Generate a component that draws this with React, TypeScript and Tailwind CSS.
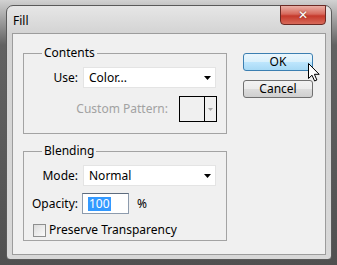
import React from 'react';

const Arrow: React.FC<{ color?: string; w?: number }> = ({ color = '#000', w = 7 }) => (
  <svg width={w} height={Math.ceil(w / 2)} viewBox={`0 0 ${w} ${Math.ceil(w / 2)}`}>
    <path d={`M0 0H${w}L${w / 2} ${Math.ceil(w / 2)}Z`} fill={color} />
  </svg>
);

const Select: React.FC<{ value: string }> = ({ value }) => (
  <div className="w-[133px] h-[21px] bg-white border border-[#e4e4e4] flex items-center justify-between pl-[5px] pr-[4px]">
    <span>{value}</span>
    <Arrow />
  </div>
);

const Label: React.FC<{ children: React.ReactNode }> = ({ children }) => (
  <span className="w-[54px] text-right shrink-0">{children}</span>
);

const App: React.FC = () => {
  return (
    <div className="w-[337px] h-[265px] overflow-hidden pt-[5px] pl-[6px] bg-[linear-gradient(to_bottom,#d2d2d2_0px,#a4a4a4_18px,#626262_45px,#505050_100%)] font-['Segoe_UI','Noto_Sans',sans-serif] text-[12px] leading-[16px] text-black">
      <div className="relative w-[326px] h-[255px] rounded-t-[7px] rounded-b-[4px] border border-[#5a5a5a] bg-[linear-gradient(to_bottom,#e6e6e6,#d3d3d3_28px,#d8d8d8)] flex flex-col px-[5px] pb-[4px]">
        {/* title bar */}
        <div className="h-[27px] flex items-start justify-between">
          <span className="mt-[7px] ml-[1px]">Fill</span>
          <div className="-mt-px w-[46px] h-[20px] rounded-b-[4px] border border-[#6b2a24] bg-[linear-gradient(to_bottom,#eab0a6,#d7685b_45%,#c5392b_55%,#d86a5a)] flex items-center justify-center">
            <span className="text-white font-bold text-[12px] leading-none font-['DejaVu_Sans',sans-serif] [text-shadow:0_0_2px_#6b2a24]">✕</span>
          </div>
        </div>

        {/* client */}
        <div className="flex-1 border border-[#9c9c9c] bg-[#f0f0f0] flex pl-[10px]">
          <div className="w-[204px] flex flex-col mt-[11px]">
            <fieldset className="border border-[#a3a3a3] px-0 pt-[6px] pb-[11px]">
              <legend className="ml-[18px] px-[2px]">Contents</legend>
              <div className="flex items-center gap-[5px]">
                <Label>Use:</Label>
                <Select value="Color..." />
              </div>
              <div className="flex items-center justify-end mt-[8px] pr-[9px]">
                <span className="text-[#a2a2a2] mr-[11px]">Custom Pattern:</span>
                <div className="w-[38px] h-[26px] border border-black flex">
                  <div className="w-[25px] border-r border-black" />
                  <div className="flex-1 flex items-center justify-center">
                    <Arrow color="#a8a8a8" w={5} />
                  </div>
                </div>
              </div>
            </fieldset>

            <fieldset className="mt-[9px] border border-[#a3a3a3] px-0 pt-[6px] pb-[2px]">
              <legend className="ml-[18px] px-[2px]">Blending</legend>
              <div className="flex items-center gap-[5px]">
                <Label>Mode:</Label>
                <Select value="Normal" />
              </div>
              <div className="flex items-center gap-[4px] mt-[7px]">
                <Label>Opacity:</Label>
                <div className="w-[47px] h-[21px] bg-white border border-[#8d9bad] border-t-[#5d6b7d] flex items-center pl-[5px]">
                  <span className="bg-[#3399ff] text-white leading-[14px] px-px">100</span>
                </div>
                <span className="ml-[4px]">%</span>
              </div>
              <div className="flex items-center mt-[8px] ml-[9px] h-[16px]">
                <div className="w-[13px] h-[13px] border border-[#8e8f8f] bg-[linear-gradient(135deg,#dcdcdc,#fbfbfb)]" />
                <span className="ml-[3px]">Preserve Transparency</span>
              </div>
            </fieldset>
          </div>

          <div className="ml-[16px] w-[70px] flex flex-col mt-[19px]">
            <div className="h-[18px] rounded-[3px] border border-[#3c7fb1] bg-[linear-gradient(to_bottom,#eaf6fd,#d9f0fc_50%,#bee6fd_50%,#a7d9f5)] flex items-center justify-center">
              OK
            </div>
            <div className="mt-[9px] h-[18px] rounded-[3px] border border-[#707070] bg-[linear-gradient(to_bottom,#f2f2f2,#ebebeb_50%,#dddddd_50%,#cfcfcf)] flex items-center justify-center">
              Cancel
            </div>
          </div>
        </div>

        {/* mouse pointer */}
        <svg className="absolute left-[301px] top-[57px]" width="12" height="19" viewBox="0 0 12 19">
          <path d="M0.5 0.5V15.5L4 12.2L6.6 18L8.9 17L6.4 11.3H11.2Z" fill="#fff" stroke="#000" strokeWidth="1" strokeLinejoin="round" />
        </svg>
      </div>
    </div>
  );
};

export default App;
